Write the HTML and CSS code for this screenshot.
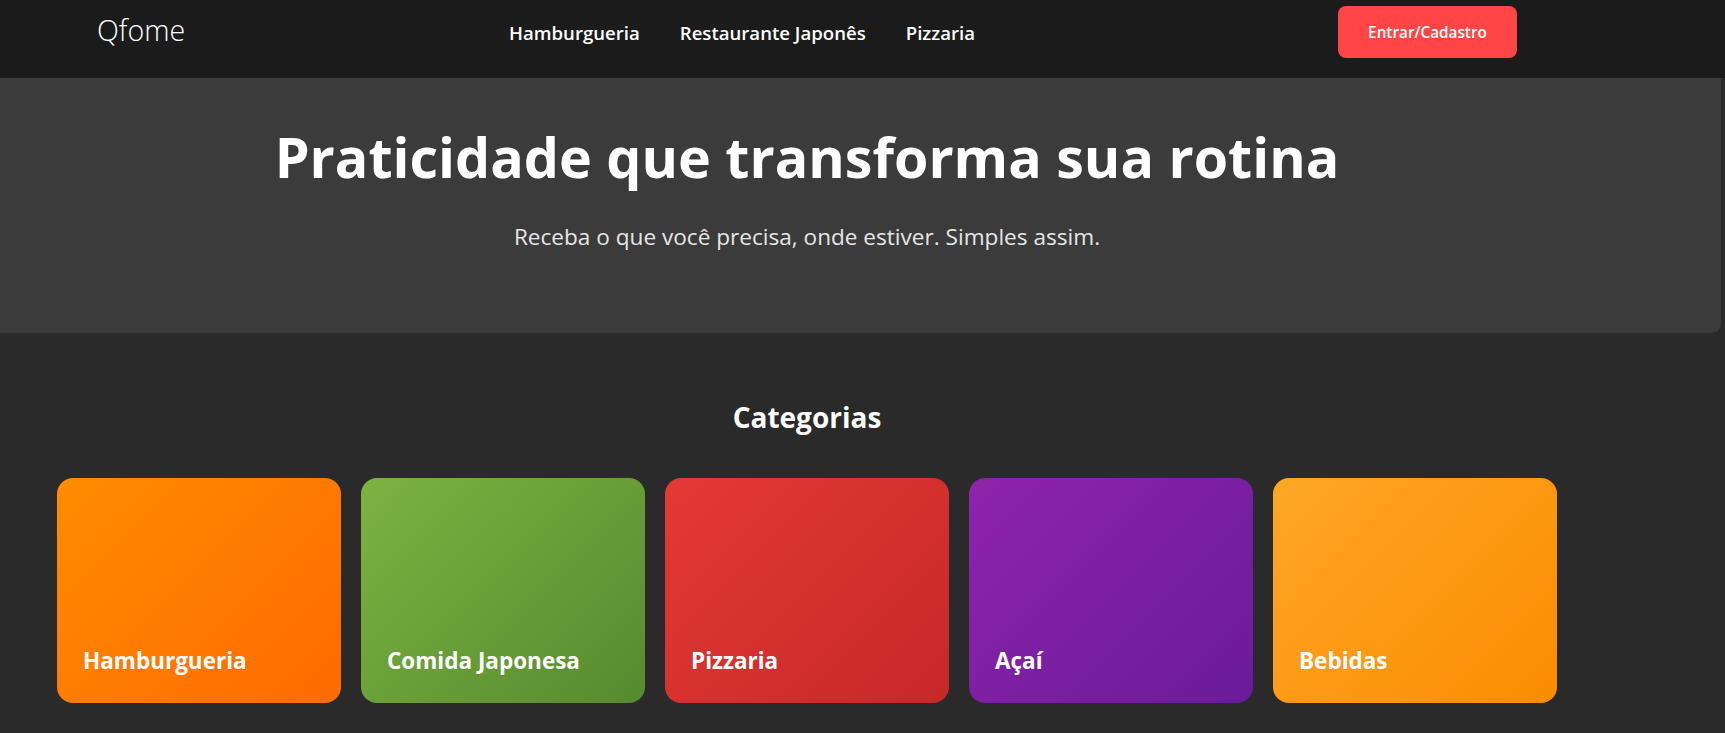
FILE: index.html
```html
<!DOCTYPE html>
<html lang="pt-BR">
<head>
<meta charset="utf-8">
<title>Qfome</title>
<link rel="stylesheet" href="styles.css">
</head>
<body>
<header class="site-header">
  <div class="header-inner">
    <div class="logo">Qfome</div>
    <nav class="main-nav">
      <a href="#">Hamburgueria</a>
      <a href="#">Restaurante Japonês</a>
      <a href="#">Pizzaria</a>
    </nav>
    <a href="#" class="btn-login">Entrar/Cadastro</a>
  </div>
</header>
<section class="hero">
  <div class="hero-inner">
    <h1 class="hero-title">Praticidade que transforma sua rotina</h1>
    <p class="hero-sub">Receba o que você precisa, onde estiver. Simples assim.</p>
  </div>
</section>
<section class="categories">
  <h2 class="section-title">Categorias</h2>
  <div class="cat-grid">
    <a href="#" class="cat-card cat-burger"><span class="cat-label">Hamburgueria</span></a>
    <a href="#" class="cat-card cat-japa"><span class="cat-label">Comida Japonesa</span></a>
    <a href="#" class="cat-card cat-pizza"><span class="cat-label">Pizzaria</span></a>
    <a href="#" class="cat-card cat-acai"><span class="cat-label">Açaí</span></a>
    <a href="#" class="cat-card cat-drinks"><span class="cat-label">Bebidas</span></a>
  </div>
</section>
</body>
</html>
```
FILE: styles.css
```css
* { box-sizing: border-box; }
html, body { margin: 0; padding: 0; }
body {
  background: #2a2a2a;
  color: #ffffff;
  font-family: "Open Sans", "Noto Sans", "DejaVu Sans", sans-serif;
  width: 1725px;
  min-height: 733px;
  overflow: hidden;
}
a { color: inherit; text-decoration: none; }

.site-header {
  background: #1b1b1b;
  height: 78px;
}
.header-inner {
  display: grid;
  grid-template-columns: 412px 1fr auto;
  align-items: center;
  width: 1420px;
  margin-left: 97px;
  padding-top: 6px;
  height: 58px;
}
.logo {
  font-size: 28.6px;
  font-weight: 300;
  justify-self: start;
  margin-top: -6px;
}
.main-nav {
  display: flex;
  gap: 40px;
  font-size: 18.6px;
  font-weight: 600;
}
.btn-login {
  display: flex;
  align-items: center;
  justify-content: center;
  width: 179px;
  height: 52px;
  background: #ff4545;
  border-radius: 8px;
  font-size: 15.3px;
  font-weight: 600;
}

.hero {
  background: #3b3b3b;
  width: 1721px;
  height: 255px;
  border-radius: 0 0 9px 0;
}
.hero-inner {
  width: 1614px;
  text-align: center;
  padding-top: 43px;
}
.hero-title {
  margin: 0;
  font-size: 55.6px;
  font-weight: 700;
  line-height: 72px;
}
.hero-sub {
  margin: 28px 0 0;
  font-size: 22.6px;
  color: #e6e6e6;
  line-height: 32px;
}

.categories {
  width: 1614px;
}
.section-title {
  margin: 0;
  padding-top: 66px;
  text-align: center;
  font-size: 28px;
  font-weight: 700;
  line-height: 36px;
}
.cat-grid {
  display: grid;
  grid-template-columns: repeat(5, 284px);
  gap: 20px;
  margin: 43px 0 0 57px;
}
.cat-card {
  height: 225px;
  border-radius: 16px;
  display: flex;
  align-items: flex-end;
  padding: 0 24px 28px 26px;
}
.cat-label {
  font-size: 22.5px;
  font-weight: 700;
  line-height: 28px;
}
.cat-burger { background: linear-gradient(135deg, #ff8c00, #ff6a00); }
.cat-japa { background: linear-gradient(135deg, #7cb342, #558b2f); }
.cat-pizza { background: linear-gradient(135deg, #e53935, #c62828); }
.cat-acai { background: linear-gradient(135deg, #8e24aa, #6a1b9a); }
.cat-drinks { background: linear-gradient(135deg, #ffa726, #fb8c00); }
```
